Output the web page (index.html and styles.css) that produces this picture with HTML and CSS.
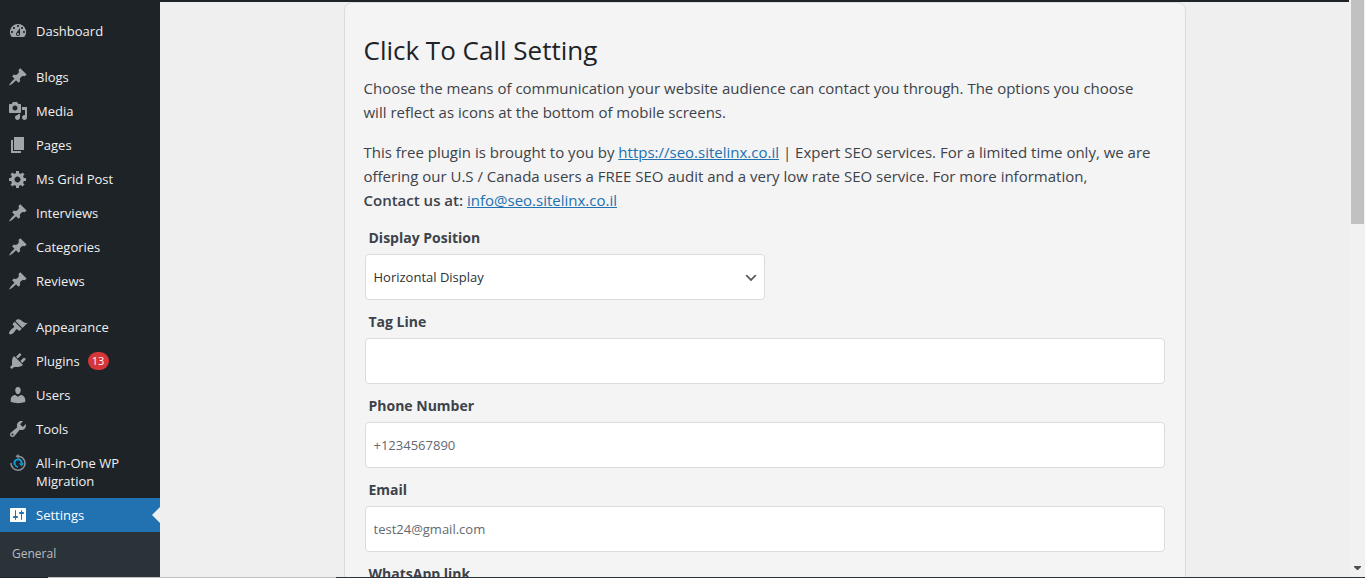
FILE: index.html
```html
<!DOCTYPE html>
<html lang="en">
<head>
<meta charset="utf-8">
<meta name="viewport" content="width=device-width, initial-scale=1">
<title>Click To Call Setting</title>
<link rel="stylesheet" href="styles.css">
</head>
<body>
<svg class="sprite" aria-hidden="true">
  <symbol id="i-pin" viewBox="0 0 20 20"><path d="M10.44 3.02l1.82-1.82 6.36 6.35-1.83 1.82c-1.05-.68-2.48-.57-3.41.36l-.75.75c-.92.93-1.04 2.35-.35 3.41l-1.83 1.82-2.41-2.41-2.8 2.79c-.42.42-3.38 2.71-3.8 2.29s1.86-3.39 2.28-3.81l2.79-2.79L4.1 9.36l1.83-1.82c1.05.69 2.48.57 3.4-.36l.75-.75c.93-.92 1.05-2.35.36-3.41z"/></symbol>
</svg>
<div class="app">
  <nav class="sidebar" aria-label="Main menu">
    <ul class="menu">
      <li><a class="item" href="#"><svg class="icon" viewBox="0 0 20 20"><path fill-rule="evenodd" d="M3.76 16h12.48A7.998 7.998 0 0 0 10 3a7.998 7.998 0 0 0-6.24 13zM10 4c.55 0 1 .45 1 1s-.45 1-1 1-1-.45-1-1 .45-1 1-1zM6 6c.55 0 1 .45 1 1s-.45 1-1 1-1-.45-1-1 .45-1 1-1zm8 0c.55 0 1 .45 1 1s-.45 1-1 1-1-.45-1-1 .45-1 1-1zm-5.37 5.55L12 7v6c0 1.1-.9 2-2 2s-2-.9-2-2c0-.57.24-1.08.63-1.45zM4 10c.55 0 1 .45 1 1s-.45 1-1 1-1-.45-1-1 .45-1 1-1zm12 0c.55 0 1 .45 1 1s-.45 1-1 1-1-.45-1-1 .45-1 1-1zm-5 3c0-.55-.45-1-1-1s-1 .45-1 1 .45 1 1 1 1-.45 1-1z"/></svg><span>Dashboard</span></a></li>
      <li class="group"><a class="item" href="#"><svg class="icon"><use href="#i-pin"/></svg><span>Blogs</span></a></li>
      <li><a class="item" href="#"><svg class="icon" viewBox="0 0 20 20"><path fill-rule="evenodd" d="M13 11V4c0-.55-.45-1-1-1h-1.67L9 1H5L3.67 3H2c-.55 0-1 .45-1 1v7c0 .55.45 1 1 1h10c.55 0 1-.45 1-1zM7 4.5c1.38 0 2.5 1.12 2.5 2.5S8.38 9.5 7 9.5 4.5 8.38 4.5 7 5.62 4.5 7 4.5zM14 6h5v10.5c0 1.38-1.12 2.5-2.5 2.5S14 17.88 14 16.5s1.12-2.5 2.5-2.5c.17 0 .34.02.5.05V9h-3V6zm-4 8.05V13h2v3.5c0 1.38-1.12 2.5-2.5 2.5S7 17.88 7 16.5 8.12 14 9.5 14c.17 0 .34.02.5.05z"/></svg><span>Media</span></a></li>
      <li><a class="item" href="#"><svg class="icon" viewBox="0 0 20 20"><path d="M6 15V2h10v13H6zm-1 1h8v2H3V5h2v11z"/></svg><span>Pages</span></a></li>
      <li><a class="item" href="#"><svg class="icon" viewBox="0 0 20 20"><path fill-rule="evenodd" d="M18 12h-2.18c-.17.7-.44 1.35-.81 1.93l1.54 1.54-2.1 2.1-1.54-1.54c-.58.36-1.23.63-1.91.79V19H8v-2.18c-.68-.16-1.33-.43-1.91-.79l-1.54 1.54-2.12-2.12 1.54-1.54c-.36-.58-.63-1.23-.79-1.91H1V9.03h2.17c.16-.7.44-1.35.8-1.94L2.43 5.55l2.1-2.1 1.54 1.54c.58-.37 1.24-.64 1.93-.81V2h3v2.18c.68.16 1.33.43 1.91.79l1.54-1.54 2.12 2.12-1.54 1.54c.36.59.64 1.24.8 1.94H18V12zm-8.5 1.5c1.66 0 3-1.34 3-3s-1.34-3-3-3-3 1.34-3 3 1.34 3 3 3z"/></svg><span>Ms Grid Post</span></a></li>
      <li><a class="item" href="#"><svg class="icon"><use href="#i-pin"/></svg><span>Interviews</span></a></li>
      <li><a class="item" href="#"><svg class="icon"><use href="#i-pin"/></svg><span>Categories</span></a></li>
      <li><a class="item" href="#"><svg class="icon"><use href="#i-pin"/></svg><span>Reviews</span></a></li>
      <li class="group"><a class="item" href="#"><svg class="icon" viewBox="0 0 20 20"><path d="M14.48 11.06L7.41 3.99l1.5-1.5c.5-.56 2.3-.47 3.51.32 1.21.8 1.43 1.28 2.91 2.1 1.18.64 2.45 1.26 4.45.85zm-.71.71L6.7 4.7 4.93 6.47c-.39.39-.39 1.02 0 1.41l1.06 1.06c.39.39.39 1.03 0 1.42-.6.6-1.43 1.11-2.21 1.69-.35.26-.7.53-1.01.84C1.43 14.23.4 16.08 1.4 17.07c.99 1 2.84-.03 4.18-1.36.31-.31.58-.66.85-1.02.57-.78 1.08-1.61 1.69-2.21.39-.39 1.02-.39 1.41 0l1.06 1.06c.39.39 1.02.39 1.41 0z"/></svg><span>Appearance</span></a></li>
      <li><a class="item" href="#"><svg class="icon" viewBox="0 0 20 20"><path d="M13.11 4.36L9.87 7.6 8 5.73l3.24-3.24c.35-.34 1.05-.2 1.56.32.52.51.66 1.21.31 1.55zm-8 1.77l.91-1.12 9.01 9.01-1.19.84c-.71.71-2.63 1.16-3.82 1.16H6.14L4.9 17.26c-.59.59-1.54.59-2.12 0-.59-.58-.59-1.53 0-2.12l1.24-1.24v-3.88c0-1.13.4-3.19 1.09-3.89zm7.26 3.97l3.24-3.24c.34-.35 1.04-.21 1.55.31.52.51.66 1.21.31 1.55l-3.24 3.25z"/></svg><span>Plugins</span><span class="count">13</span></a></li>
      <li><a class="item" href="#"><svg class="icon" viewBox="0 0 20 20"><path d="M10 9.25c-2.27 0-2.73-3.44-2.73-3.44C7 4.02 7.82 2 9.97 2c2.16 0 2.98 2.02 2.71 3.81 0 0-.41 3.44-2.68 3.44zm0 2.57L12.72 10c2.39 0 4.52 2.33 4.52 4.53v2.49s-3.65 1.13-7.24 1.13c-3.65 0-7.24-1.13-7.24-1.13v-2.49c0-2.25 1.94-4.48 4.47-4.48z"/></svg><span>Users</span></a></li>
      <li><a class="item" href="#"><svg class="icon" viewBox="0 0 20 20"><path fill-rule="evenodd" d="M16.68 9.77c-1.34 1.34-3.3 1.67-4.95.99l-5.41 6.52c-.99.99-2.59.99-3.58 0s-.99-2.59 0-3.57l6.52-5.42c-.68-1.65-.35-3.61.99-4.95 1.28-1.28 3.12-1.62 4.72-1.06l-2.89 2.89 2.82 2.82 2.86-2.87c.53 1.58.18 3.39-1.08 4.65zM3.81 16.21c.4.39 1.04.39 1.43 0 .4-.4.4-1.04 0-1.43-.39-.4-1.03-.4-1.43 0-.39.39-.39 1.03 0 1.43z"/></svg><span>Tools</span></a></li>
      <li><a class="item" href="#"><svg class="icon" viewBox="0 0 20 20"><g fill="none"><path d="M10 3.200A7 7 0 1 1 3 10" stroke="#8c9196" stroke-width="1.600"/><path d="M6.800 11.500A3.600 3.600 0 1 1 13.600 10.500" stroke="#0f9ddb" stroke-width="2"/><path d="M6.600 11q.8 2.600 3.400 3" stroke="#0f9ddb" stroke-width="1.400"/></g><path d="M7.500 3.200 10.600.9v4.600z" fill="#8c9196"/><path d="M11 10.200h5l-2.500 3.200z" fill="#0f9ddb"/></svg><span>All-in-One WP Migration</span></a></li>
      <li><a class="item current" href="#" aria-current="page"><svg class="icon" viewBox="0 0 20 20"><path fill-rule="evenodd" d="M18 16V4c0-.55-.45-1-1-1H3c-.55 0-1 .45-1 1v12c0 .55.45 1 1 1h14c.55 0 1-.45 1-1zM8 11h1c.55 0 1 .45 1 1s-.45 1-1 1H8v1.500c0 .28-.22.5-.5.5s-.5-.22-.5-.5V13H6c-.55 0-1-.45-1-1s.45-1 1-1h1V5.500c0-.28.22-.5.5-.5s.5.22.5.5V11zm5-2h-1c-.55 0-1-.45-1-1s.45-1 1-1h1V5.500c0-.28.22-.5.5-.5s.5.22.5.5V7h1c.55 0 1 .45 1 1s-.45 1-1 1h-1v5.500c0 .28-.22.5-.5.5s-.5-.22-.5-.5V9z"/></svg><span>Settings</span></a>
        <ul class="submenu"><li><a href="#">General</a></li></ul>
      </li>
    </ul>
  </nav>
  <main class="content">
    <form class="card">
      <h1>Click To Call Setting</h1>
      <p>Choose the means of communication your website audience can contact you through. The options you choose will reflect as icons at the bottom of mobile screens.</p>
      <p>This free plugin is brought to you by <a href="#">https://seo.sitelinx.co.il</a> | Expert SEO services. For a limited time only, we are offering our U.S / Canada users a FREE SEO audit and a very low rate SEO service. For more information,<br><strong>Contact us at:</strong> <a href="#">info@seo.sitelinx.co.il</a></p>
      <div class="field">
        <label for="position">Display Position</label>
        <div class="select">
          <select id="position"><option>Horizontal Display</option></select>
          <svg class="chevron" viewBox="0 0 20 20"><path d="M5 6l5 5 5-5 2 1-7 7-7-7z"/></svg>
        </div>
      </div>
      <div class="field"><label for="tag">Tag Line</label><input id="tag" type="text"></div>
      <div class="field"><label for="phone">Phone Number</label><input id="phone" type="tel" placeholder="+1234567890"></div>
      <div class="field"><label for="email">Email</label><input id="email" type="email" placeholder="test24@gmail.com"></div>
      <div class="field"><label for="whatsapp">WhatsApp link</label><input id="whatsapp" type="text"></div>
    </form>
  </main>
  <div class="scrollbar" aria-hidden="true">
    <div class="thumb"></div>
    <svg class="down" viewBox="0 0 7 4"><path d="M0 0h7v1L4 4H3L0 1z"/></svg>
  </div>
</div>
<div class="edge"></div>
</body>
</html>
```
FILE: styles.css
```css
* { box-sizing: border-box; }

body {
  margin: 0;
  height: 100vh;
  display: flex;
  flex-direction: column;
  overflow: hidden;
  background: #efeff0;
  color: #3c434a;
  font-family: "Segoe UI", "Open Sans", "Noto Sans", sans-serif;
  font-size: 15px;
  line-height: 24px;
}

ul { margin: 0; padding: 0; list-style: none; }

.sprite { display: none; }

.app {
  flex: 1;
  min-height: 0;
  display: grid;
  grid-template-columns: 160px 1fr 16px;
}

.sidebar {
  background: #1d2327;
  padding-top: 14px;
  overflow: hidden;
}

.group { margin-top: 12px; }

.item {
  display: flex;
  align-items: flex-start;
  gap: 8px;
  padding: 8px;
  color: #f0f0f1;
  font-size: 13px;
  line-height: 18px;
  text-decoration: none;
}

.icon {
  flex: none;
  width: 20px;
  height: 20px;
  margin: -1px 0;
  fill: #a0a5aa;
}

.count {
  min-width: 21px;
  border-radius: 9px;
  background: #d63638;
  color: #fff;
  font-size: 11px;
  text-align: center;
}

.current {
  position: relative;
  background: #2271b1;
  color: #fff;
}

.current .icon { fill: #fff; }

.current::after {
  content: "";
  position: absolute;
  right: 0;
  top: 9px;
  border: 8px solid transparent;
  border-left-width: 0;
  border-right-color: #efeff0;
}

.submenu {
  background: #2c3338;
  padding: 13px 12px 40px;
  font-size: 12px;
  line-height: 18px;
}

.submenu a { color: #b8bcbf; text-decoration: none; }

.content {
  border-top: 2px solid #1d2327;
  padding-left: 20px;
  overflow: hidden;
}

.card {
  max-width: 842px;
  margin: 0 auto;
  padding: 32px 19px;
  border: 1px solid #dcdcde;
  border-radius: 8px;
  background: #f4f4f4;
}

h1 {
  margin: 0 0 11px;
  color: #1d2327;
  font-size: 26px;
  line-height: 30px;
  font-weight: 500;
}

p { margin: 0 0 16px; padding-right: 8px; }

.card p a { color: #2271b1; }

strong { font-weight: 600; }

.field { margin: 0 0 10px; padding: 0 1px; }

p + .field { margin-top: -2px; }

.field label {
  display: block;
  padding: 0 4px 4px;
  font-size: 14px;
  font-weight: 700;
}

input, select {
  display: block;
  width: 100%;
  height: 46px;
  margin: 0;
  padding: 0 8px;
  border: 1px solid #dcdcde;
  border-radius: 4px;
  background: #fff;
  color: #2c3338;
  font: inherit;
  font-size: 13px;
}

input::placeholder { color: #646970; opacity: 1; }

.select { position: relative; width: 50%; }

select { appearance: none; }

.chevron {
  position: absolute;
  right: 6px;
  top: 16px;
  width: 16px;
  height: 16px;
  fill: #50575e;
  pointer-events: none;
}

.scrollbar {
  display: flex;
  flex-direction: column;
  justify-content: space-between;
  align-items: center;
  padding-bottom: 7px;
  background: #f1f1f1;
}

.thumb { width: 13px; height: 224px; background: #c1c1c1; }

.down { width: 7px; height: 4px; fill: #505050; }

.edge {
  height: 1px;
  background: linear-gradient(90deg, #1d2327 48px, #c1c1c1 48px 336px, #2c3338 336px);
}
```
